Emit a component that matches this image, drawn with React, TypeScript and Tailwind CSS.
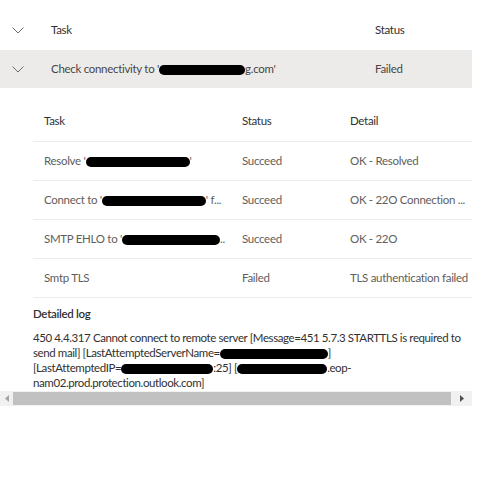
import React from 'react';

const Redact = ({ w }: { w: number }) => (
	<span className="inline-block h-[10px] rounded-full bg-black align-middle" style={{ width: w }} />
);

const Chevron = () => (
	<svg width="12" height="7" viewBox="0 0 12 7" fill="none" className="text-[#605e5c]">
		<path d="M0.5 0.5 L6 6 L11.5 0.5" stroke="currentColor" strokeWidth="0.9" />
	</svg>
);

const rows = [
	{ task: <>Resolve '<Redact w={104} />'</>, status: 'Succeed', detail: 'OK - Resolved' },
	{ task: <>Connect to '<Redact w={104} />' f...</>, status: 'Succeed', detail: 'OK - 22O Connection ...' },
	{ task: <>SMTP EHLO to '<Redact w={98} />..</>, status: 'Succeed', detail: 'OK - 22O' },
	{ task: <>Smtp TLS</>, status: 'Failed', detail: 'TLS authentication failed' },
];

const App = () => {
	return (
		<div
			className="h-[478px] w-[500px] overflow-hidden bg-white text-[11.5px] tracking-[-0.3px] text-[#323130]"
			style={{ fontFamily: 'Lato, "Open Sans", sans-serif' }}
		>
			<div className="w-[472px]">
				{/* Outer table header */}
				<div className="flex h-[50px] items-end pb-[12px]">
					<div className="flex w-[51px] shrink-0 justify-start pl-[12px] pb-[4px]">
						<Chevron />
					</div>
					<div className="w-[324px] shrink-0">Task</div>
					<div>Status</div>
				</div>

				{/* Expanded row */}
				<div className="flex h-[38px] items-center bg-[#edebe9] text-[#484644]">
					<div className="flex w-[51px] shrink-0 pl-[12px]">
						<Chevron />
					</div>
					<div className="w-[324px] shrink-0 whitespace-nowrap">
						Check connectivity to '<Redact w={86} />g.com'
					</div>
					<div>Failed</div>
				</div>

				{/* Sub table */}
				<div className="ml-[33px] mt-[12px]">
					<div className="flex h-[42px] items-center border-b border-[#edebe9] pl-[11px] text-[#323130]">
						<div className="w-[198px] shrink-0">Task</div>
						<div className="w-[108px] shrink-0">Status</div>
						<div>Detail</div>
					</div>
					{rows.map((r, i) => (
						<div key={i} className="flex h-[39px] items-center border-b border-[#edebe9] pl-[11px] text-[#605e5c]">
							<div className="w-[198px] shrink-0 overflow-hidden whitespace-nowrap">{r.task}</div>
							<div className="w-[108px] shrink-0">{r.status}</div>
							<div className="whitespace-nowrap">{r.detail}</div>
						</div>
					))}
				</div>

				{/* Detailed log */}
				<div className="ml-[33px] mt-[7px]">
					<div className="font-semibold text-[#323130]">Detailed log</div>
					<div className="mt-[8px] whitespace-nowrap leading-[15px] tracking-[-0.4px] text-[#323130]">
						<div>450 4.4.317 Cannot connect to remote server [Message=451 5.7.3 STARTTLS is required to</div>
						<div>
							send mail] [LastAttemptedServerName=<Redact w={108} />]
						</div>
						<div>
							[LastAttemptedIP=<Redact w={92} />:25] [<Redact w={90} />.eop-
						</div>
						<div>nam02.prod.protection.outlook.com]</div>
					</div>
				</div>

				{/* Horizontal scrollbar */}
				<div className="mt-[1px] flex h-[15px] items-center bg-[#f1f1f1]">
					<div className="flex w-[13px] justify-center">
						<svg width="4" height="7" viewBox="0 0 4 7">
							<path d="M4 0 L0 3.5 L4 7 Z" fill="#a3a3a3" />
						</svg>
					</div>
					<div className="h-[13px] flex-1 bg-[#c1c1c1]" />
					<div className="flex w-[21px] justify-center">
						<svg width="4" height="7" viewBox="0 0 4 7">
							<path d="M0 0 L4 3.5 L0 7 Z" fill="#505050" />
						</svg>
					</div>
				</div>
			</div>
		</div>
	);
};

export default App;
